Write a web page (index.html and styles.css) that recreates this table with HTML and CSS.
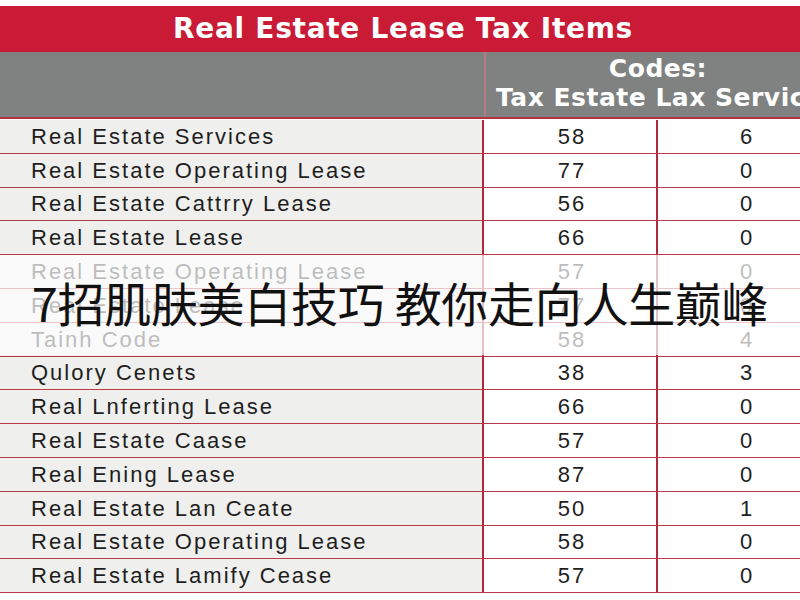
FILE: index.html
```html
<!DOCTYPE html>
<html>
<head>
<meta charset="utf-8">
<link rel="stylesheet" href="styles.css">
</head>
<body>
<div class="page">
  <div class="title">Real Estate Lease Tax Items</div>
  <div class="head">
    <div class="head-blank"></div>
    <div class="head-codes">
      <div class="codes-1">Codes:</div>
      <div class="codes-2">Tax Estate Lax Services</div>
    </div>
  </div>
  <div class="rows">
    <div class="row"><div class="c name">Real Estate Services</div><div class="c num">58</div><div class="c num">6</div></div>
    <div class="row"><div class="c name">Real Estate Operating Lease</div><div class="c num">77</div><div class="c num">0</div></div>
    <div class="row"><div class="c name">Real Estate Cattrry Lease</div><div class="c num">56</div><div class="c num">0</div></div>
    <div class="row"><div class="c name">Real Estate Lease</div><div class="c num">66</div><div class="c num">0</div></div>
    <div class="row"><div class="c name">Real Estate Operating Lease</div><div class="c num">57</div><div class="c num">0</div></div>
    <div class="row"><div class="c name">Real Estate Lease</div><div class="c num">77</div><div class="c num">0</div></div>
    <div class="row"><div class="c name">Tainh Code</div><div class="c num">58</div><div class="c num">4</div></div>
    <div class="row"><div class="c name">Qulory Cenets</div><div class="c num">38</div><div class="c num">3</div></div>
    <div class="row"><div class="c name">Real Lnferting Lease</div><div class="c num">66</div><div class="c num">0</div></div>
    <div class="row"><div class="c name">Real Estate Caase</div><div class="c num">57</div><div class="c num">0</div></div>
    <div class="row"><div class="c name">Real Ening Lease</div><div class="c num">87</div><div class="c num">0</div></div>
    <div class="row"><div class="c name">Real Estate Lan Ceate</div><div class="c num">50</div><div class="c num">1</div></div>
    <div class="row"><div class="c name">Real Estate Operating Lease</div><div class="c num">58</div><div class="c num">0</div></div>
    <div class="row"><div class="c name">Real Estate Lamify Cease</div><div class="c num">57</div><div class="c num">0</div></div>
  </div>
  <div class="veil"></div>
  <div class="caption">7招肌肤美白技巧 教你走向人生巅峰</div>
</div>
</body>
</html>
```

FILE: styles.css
```css
html, body {
  margin: 0;
  padding: 0;
  background: #ffffff;
}
.page {
  position: relative;
  width: 800px;
  height: 600px;
  overflow: hidden;
  padding-top: 6px;
  box-sizing: border-box;
  font-family: "Liberation Sans", "DejaVu Sans", sans-serif;
}
.title {
  height: 46px;
  background: #c91b35;
  color: #ffffff;
  font-family: "DejaVu Sans", sans-serif;
  font-weight: bold;
  font-size: 28px;
  line-height: 46px;
  text-align: center;
  padding-left: 6px;
  letter-spacing: 0.7px;
}
.head {
  display: flex;
  height: 65px;
  background: #808281;
  border-bottom: 2px solid #b8303f;
}
.head-blank {
  width: 484px;
  border-right: 2px solid #b87a82;
}
.head-codes {
  flex: 1;
  color: #ffffff;
  font-family: "DejaVu Sans", sans-serif;
  font-weight: bold;
  font-size: 25px;
  letter-spacing: 0.5px;
  white-space: nowrap;
  overflow: hidden;
  padding-top: 2px;
}
.codes-1 {
  text-align: center;
  padding-left: 30px;
  line-height: 29px;
}
.codes-2 {
  padding-left: 10px;
  line-height: 30px;
}
.rows {
  margin-top: 1px;
}
.row {
  display: grid;
  grid-template-columns: 484px 174px 1fr;
  height: 33.8px;
  box-sizing: border-box;
  border-bottom: 1.5px solid #b83a48;
  font-size: 22px;
  letter-spacing: 2px;
  color: #1e1e1e;
}
.c {
  display: flex;
  align-items: center;
  padding-top: 1px;
}
.name {
  background: #efefed;
  padding-left: 31px;
  border-right: 2px solid #b0283c;
}
.num {
  justify-content: center;
  background: #ffffff;
}
.row .num:nth-child(2) {
  border-right: 2px solid #b0283c;
  padding-left: 4px;
}
.row .num:nth-child(3) {
  padding-left: 36px;
}
.veil {
  position: absolute;
  left: 0;
  top: 255px;
  width: 800px;
  height: 100px;
  background: rgba(255, 255, 255, 0.7);
}
.caption {
  position: absolute;
  left: 0;
  top: 272px;
  width: 800px;
  text-align: center;
  font-family: "Noto Sans CJK SC", sans-serif;
  font-size: 47px;
  line-height: 60px;
  letter-spacing: -0.3px;
  color: #111111;
}
```
